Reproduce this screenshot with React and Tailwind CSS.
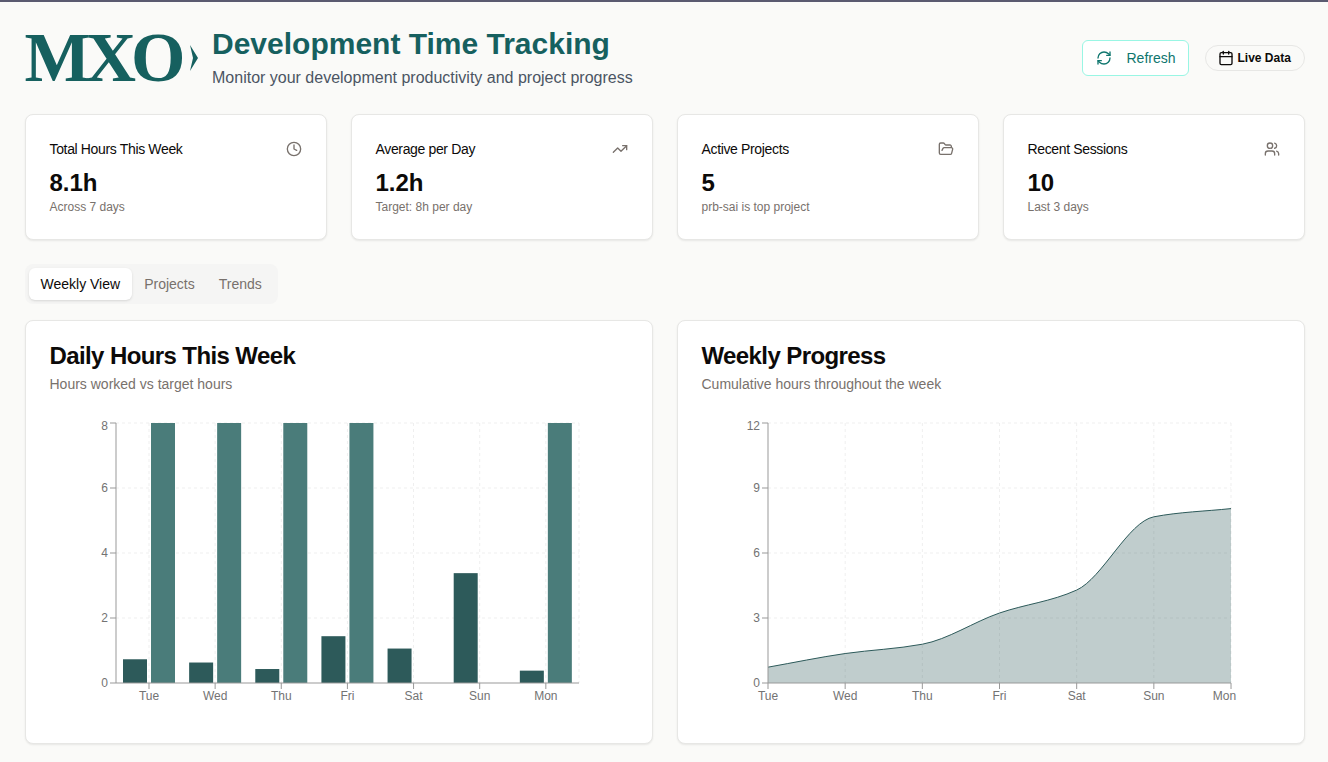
import { Calendar, Clock, FolderOpen, RefreshCw, TrendingUp, Users } from 'lucide-react';

const stats = [
  { title: 'Total Hours This Week', value: '8.1h', note: 'Across 7 days', Icon: Clock },
  { title: 'Average per Day', value: '1.2h', note: 'Target: 8h per day', Icon: TrendingUp },
  { title: 'Active Projects', value: '5', note: 'prb-sai is top project', Icon: FolderOpen },
  { title: 'Recent Sessions', value: '10', note: 'Last 3 days', Icon: Users },
];

const days = ['Tue', 'Wed', 'Thu', 'Fri', 'Sat', 'Sun', 'Mon'];
const daily = [0.73, 0.63, 0.43, 1.44, 1.06, 3.38, 0.38];
const target = [8, 8, 8, 8, 0, 0, 8];
const cumulative = [0.73, 1.36, 1.79, 3.23, 4.29, 7.67, 8.05];

// same curve as d3 monotoneX
function monotonePath(pts) {
  const n = pts.length;
  const dx = [], m = [], t = [];
  for (let i = 0; i < n - 1; i++) {
    dx[i] = pts[i + 1][0] - pts[i][0];
    m[i] = (pts[i + 1][1] - pts[i][1]) / dx[i];
  }
  t[0] = m[0];
  t[n - 1] = m[n - 2];
  for (let i = 1; i < n - 1; i++) {
    t[i] = m[i - 1] * m[i] <= 0 ? 0 : (2 * m[i - 1] * m[i]) / (m[i - 1] + m[i]);
  }
  let d = `M${pts[0][0]},${pts[0][1]}`;
  for (let i = 0; i < n - 1; i++) {
    const h = dx[i] / 3;
    d += `C${pts[i][0] + h},${pts[i][1] + h * t[i]} ${pts[i + 1][0] - h},${pts[i + 1][1] - h * t[i + 1]} ${pts[i + 1][0]},${pts[i + 1][1]}`;
  }
  return d;
}

function Grid({ left, right, xs }) {
  return (
    <g stroke="#efefef" strokeDasharray="3 3">
      {[9, 74, 139, 204].map(y => <line key={y} x1={left} x2={right} y1={y} y2={y} />)}
      {xs.map(x => <line key={x} x1={x} x2={x} y1={9} y2={269} />)}
    </g>
  );
}

function Axes({ left, right, xs, yLabels, labels, lastShift = 0 }) {
  return (
    <g fill="#737373" fontSize="12" fontFamily="'Liberation Sans', sans-serif">
      <g stroke="#999999">
        <line x1={left} x2={left} y1={9} y2={269} />
        <line x1={left} x2={right} y1={269} y2={269} />
        {[9, 74, 139, 204, 269].map(y => <line key={y} x1={left - 6} x2={left} y1={y} y2={y} />)}
        {xs.map(x => <line key={x} x1={x} x2={x} y1={269} y2={275} />)}
      </g>
      {yLabels.map((l, i) => (
        <text key={l} x={left - 8} y={i === 4 ? 16 : 269 - i * 65 + 4} textAnchor="end">{l}</text>
      ))}
      {labels.map((l, i) => (
        <text key={l} x={xs[i] - (i === 6 ? lastShift : 0)} y={286} textAnchor="middle">{l}</text>
      ))}
    </g>
  );
}

function BarChart() {
  const xs = days.map((_, i) => 123 + i * 66.14);
  return (
    <svg width="626" height="308" className="block">
      <Grid left={90} right={553} xs={[...xs, 553]} />
      {days.map((d, i) => {
        const h = daily[i] * 32.5;
        return <rect key={d} x={xs[i] - 26} y={269 - h} width="24" height={h} fill="#2d5a5a" />;
      })}
      {days.map((d, i) => target[i] > 0 && (
        <rect key={d} x={xs[i] + 2} y={9} width="24" height={260} fill="#4a7c7a" />
      ))}
      <Axes left={90} right={553} xs={xs} yLabels={[0, 2, 4, 6, 8]} labels={days} />
    </svg>
  );
}

function AreaChart() {
  const xs = days.map((_, i) => 90 + i * 77.17);
  const pts = cumulative.map((v, i) => [xs[i], 269 - v * (260 / 12)]);
  const line = monotonePath(pts);
  return (
    <svg width="626" height="308" className="block">
      <Grid left={90} right={553} xs={xs.slice(1)} />
      <path d={`${line}L553,269L90,269Z`} fill="#2d5a5a" fillOpacity="0.3" />
      <path d={line} fill="none" stroke="#2d5a5a" strokeWidth="1" />
      <Axes left={90} right={553} xs={xs} yLabels={[0, 3, 6, 9, 12]} labels={days} lastShift={6.5} />
    </svg>
  );
}

function ChartCard({ title, subtitle, children }) {
  return (
    <div className="h-[424px] bg-white border border-[#e7e7e5] rounded-lg shadow-[0_1px_2px_rgba(0,0,0,0.08)]">
      <div className="px-6 pt-[19px] h-[93px]">
        <h3 className="text-2xl leading-8 font-bold tracking-tight text-[#0c0a09]">{title}</h3>
        <p className="mt-[2px] text-sm leading-5 text-[#78716c]">{subtitle}</p>
      </div>
      {children}
    </div>
  );
}

export default function App() {
  return (
    <div className="min-h-screen bg-[#fafaf8] border-t-2 border-[#5a5a70] font-['Liberation_Sans',sans-serif]">
      <div className="pl-[24.5px] pr-[23.5px]">
        <header className="flex items-center justify-between h-[112px]">
          <div className="flex items-center">
            <div className="flex items-center w-[187.5px] text-[#16605f]">
              <span className="font-['Liberation_Serif',serif] font-bold text-[70px] leading-none tracking-[-5px]">MXO</span>
              <svg width="10" height="26" viewBox="0 0 10 26" className="ml-[8px]">
                <path d="M1 0 L9 13 L1 26 L4 13 Z" fill="currentColor" />
              </svg>
            </div>
            <div>
              <h1 className="text-3xl leading-9 font-bold text-[#16605f]">Development Time Tracking</h1>
              <p className="mt-[4px] text-base leading-6 text-[#4b5563]">Monitor your development productivity and project progress</p>
            </div>
          </div>
          <div className="flex items-center gap-4">
            <button className="flex items-center h-9 w-[107px] pl-[13px] bg-white border border-[#99f6e4] rounded-md text-sm text-[#0f766e]">
              <RefreshCw size={16} />
              <span className="ml-[15px]">Refresh</span>
            </button>
            <div className="flex items-center h-[26px] w-[100px] pl-[12px] bg-[#fafaf8] border border-[#e7e7e5] rounded-full text-xs font-bold text-[#0c0a09]">
              <Calendar size={16} />
              <span className="ml-[4px]">Live Data</span>
            </div>
          </div>
        </header>

        <div className="grid grid-cols-4 gap-6">
          {stats.map(({ title, value, note, Icon }) => (
            <div key={title} className="h-[126px] px-6 pt-[24px] bg-white border border-[#e7e7e5] rounded-lg shadow-[0_1px_2px_rgba(0,0,0,0.08)]">
              <div className="flex items-center justify-between h-5">
                <span className="text-sm font-medium tracking-tight text-[#0c0a09]">{title}</span>
                <Icon size={16} className="text-[#78716c]" />
              </div>
              <div className="mt-[8px] text-2xl leading-8 font-bold text-[#0c0a09]">{value}</div>
              <div className="text-xs leading-4 text-[#78716c]">{note}</div>
            </div>
          ))}
        </div>

        <div className="mt-6 inline-flex items-center h-10 p-1 bg-[#f5f5f4] rounded-lg text-sm text-[#78716c]">
          <div className="h-8 px-3 flex items-center bg-white rounded-md shadow-sm text-[#0c0a09]">Weekly View</div>
          <div className="h-8 px-3 flex items-center">Projects</div>
          <div className="h-8 px-3 flex items-center">Trends</div>
        </div>

        <div className="mt-[16px] grid grid-cols-2 gap-6">
          <ChartCard title="Daily Hours This Week" subtitle="Hours worked vs target hours">
            <BarChart />
          </ChartCard>
          <ChartCard title="Weekly Progress" subtitle="Cumulative hours throughout the week">
            <AreaChart />
          </ChartCard>
        </div>
      </div>
    </div>
  );
}
